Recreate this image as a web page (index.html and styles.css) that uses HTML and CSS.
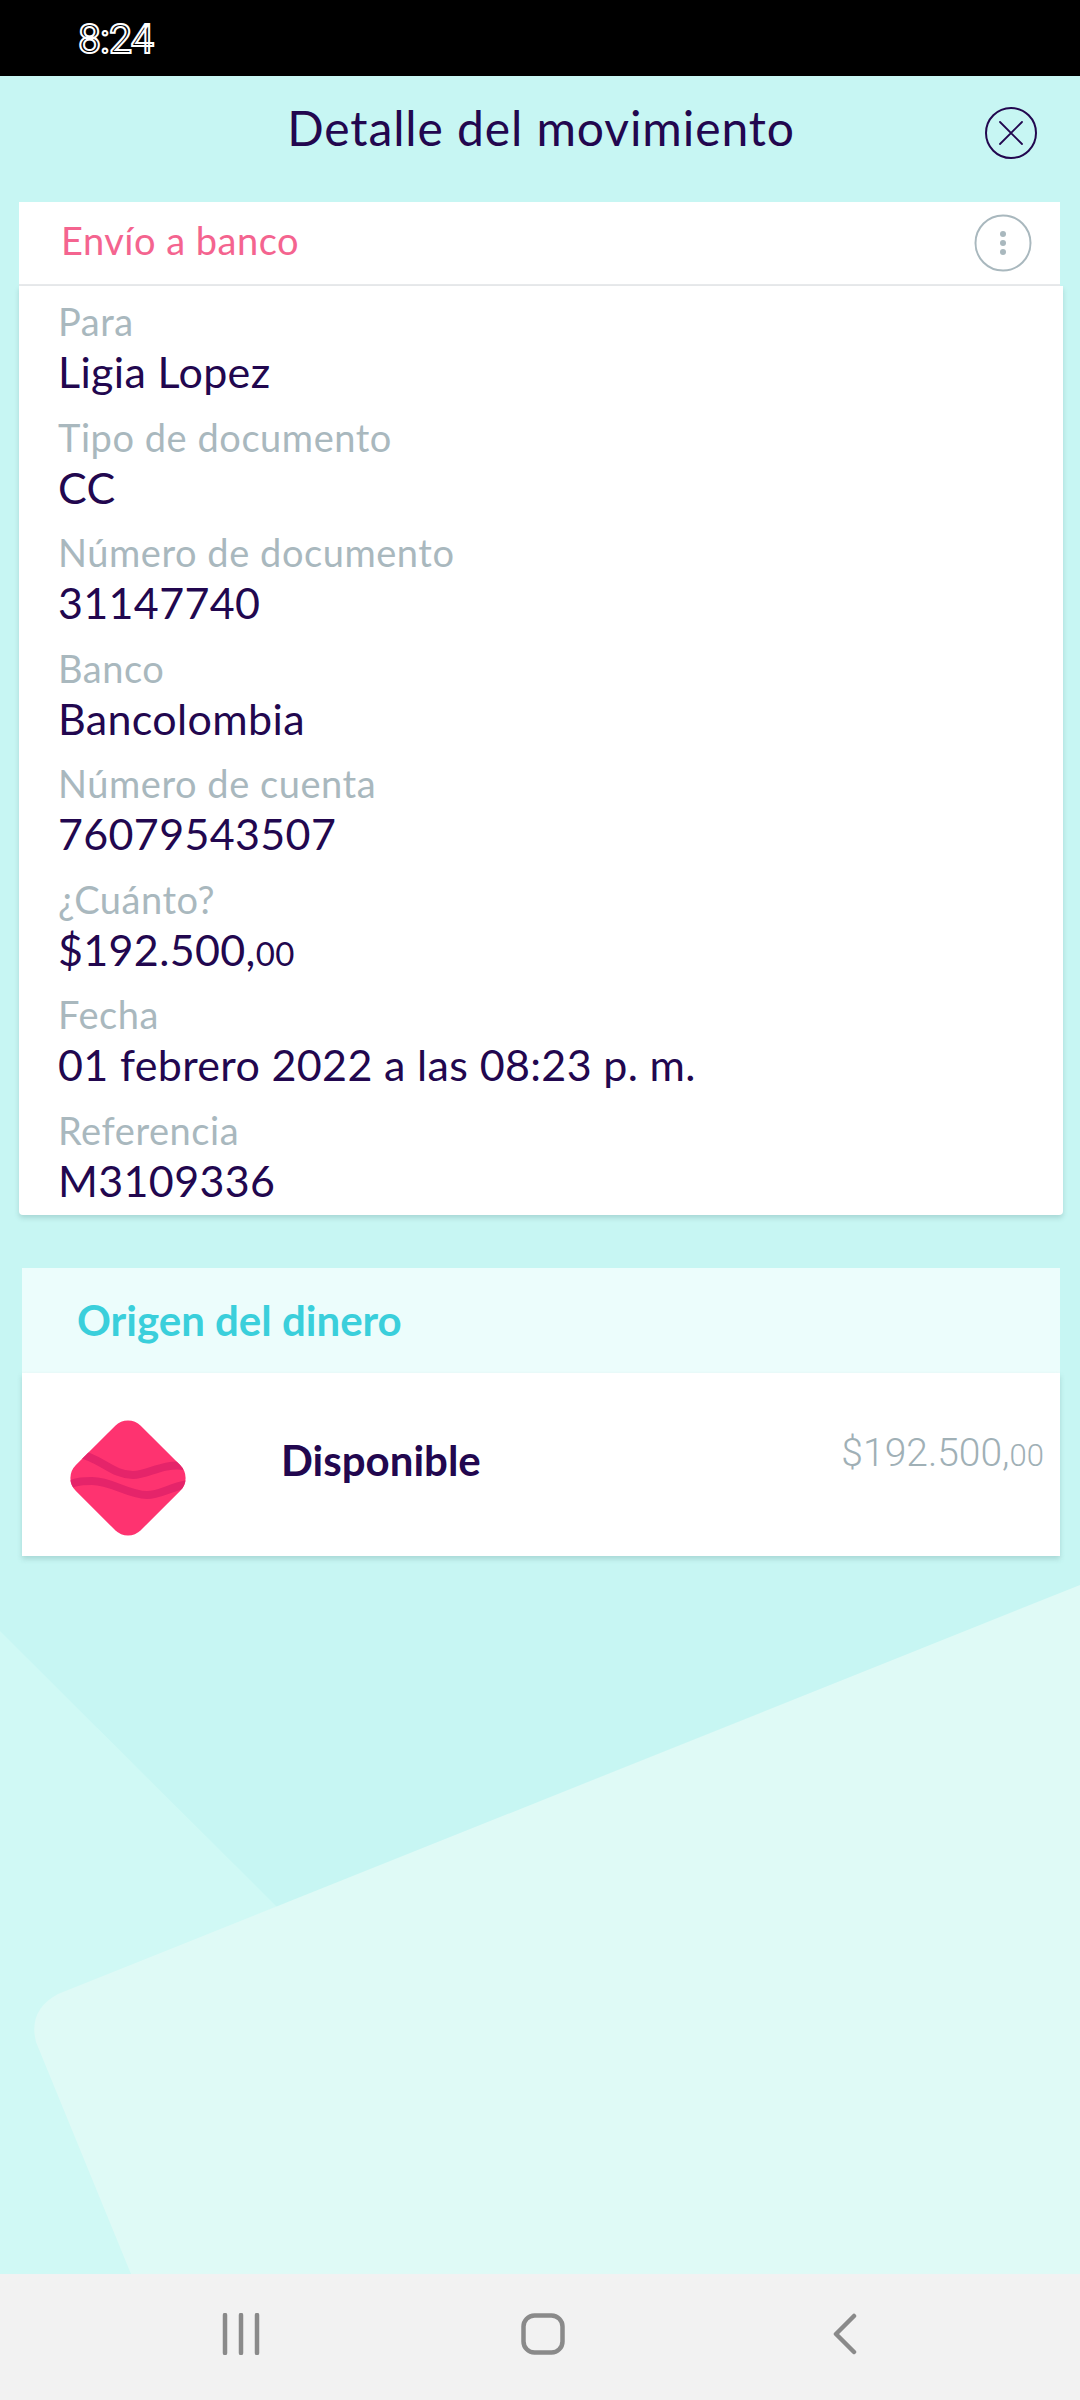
FILE: index.html
```html
<!DOCTYPE html>
<html lang="es">
<head>
<meta charset="utf-8">
<title>Detalle del movimiento</title>
<link rel="stylesheet" href="styles.css">
</head>
<body>
<div class="app">
  <div class="status"><span class="time">8:24</span></div>
  <main class="main">
    <svg class="bg" viewBox="0 0 1080 2198" preserveAspectRatio="none" aria-hidden="true">
      <polygon class="bg-tri" points="0,1555 278,1832 0,1990"/>
      <polygon class="bg-tri" points="0,1900 60,1900 131,2198 0,2198"/>
      <path class="bg-card" d="M1080,1509 L58,1918 Q28,1934 36,1966 L131,2198 L1080,2198 Z"/>
    </svg>
    <header class="top">
      <h1 class="title">Detalle del movimiento</h1>
      <button class="close" aria-label="Cerrar">
        <svg viewBox="0 0 52 52" width="52" height="52"><circle cx="26" cy="26" r="25" fill="none" stroke="#22074f" stroke-width="2"/><path d="M15 15 L37 37 M37 15 L15 37" stroke="#22074f" stroke-width="1.800" stroke-linecap="round" fill="none"/></svg>
      </button>
    </header>
    <section class="detail">
      <div class="detail-head">
        <span class="detail-name">Envío a banco</span>
        <svg class="more" viewBox="0 0 58 58" width="58" height="58"><circle cx="29" cy="29" r="27.500" fill="#fff" stroke="#a9b8be" stroke-width="2"/><circle cx="29" cy="20" r="3" fill="#a9b8be"/><circle cx="29" cy="29" r="3" fill="#a9b8be"/><circle cx="29" cy="38" r="3" fill="#a9b8be"/></svg>
      </div>
      <dl class="rows">
        <div class="row"><dt>Para</dt><dd>Ligia Lopez</dd></div>
        <div class="row"><dt>Tipo de documento</dt><dd>CC</dd></div>
        <div class="row"><dt>Número de documento</dt><dd>31147740</dd></div>
        <div class="row"><dt>Banco</dt><dd>Bancolombia</dd></div>
        <div class="row"><dt>Número de cuenta</dt><dd>76079543507</dd></div>
        <div class="row"><dt>¿Cuánto?</dt><dd>$192.500,<small class="cents">00</small></dd></div>
        <div class="row"><dt>Fecha</dt><dd>01 febrero 2022 a las 08:23 p. m.</dd></div>
        <div class="row"><dt>Referencia</dt><dd>M3109336</dd></div>
      </dl>
    </section>
    <section class="origin">
      <h2 class="origin-head">Origen del dinero</h2>
      <div class="origin-body">
        <svg class="gem" viewBox="0 0 116 118" width="116" height="118">
          <defs><clipPath id="gemclip"><rect x="12" y="13" width="92" height="92" rx="18" transform="rotate(45 58 59)"/></clipPath></defs>
          <rect x="12" y="13" width="92" height="92" rx="18" transform="rotate(45 58 59)" fill="#fe3370"/>
          <g clip-path="url(#gemclip)" fill="none" stroke="#e5246a" stroke-width="8">
            <path d="M6 34 C30 38 42 56 63 56 C78 56 92 44 114 47"/>
            <path d="M-2 66 C8 62 14 62 22 62 C42 62 58 76 77 76 C90 76 100 68 118 65"/>
          </g>
        </svg>
        <span class="origin-name">Disponible</span>
        <span class="origin-amount">$192.500,<small class="cents">00</small></span>
      </div>
    </section>
  </main>
  <nav class="nav">
    <svg viewBox="0 0 38 42" width="38" height="42"><path d="M3 2 V40 M19 2 V40 M35 2 V40" stroke="#8a8a8a" stroke-width="4.500" stroke-linecap="round" fill="none"/></svg>
    <svg class="nav-home" viewBox="0 0 44 42" width="44" height="42"><rect x="2.500" y="2.500" width="39" height="37" rx="11" fill="none" stroke="#8a8a8a" stroke-width="4.500"/></svg>
    <svg viewBox="0 0 24 42" width="24" height="42"><path d="M21 3 L3 21 L21 39" stroke="#8a8a8a" stroke-width="4.500" stroke-linecap="round" stroke-linejoin="round" fill="none"/></svg>
  </nav>
</div>
</body>
</html>
```
FILE: styles.css
```css
* { box-sizing: border-box; }
html, body { margin: 0; padding: 0; }
body { width: 1080px; height: 2400px; overflow: hidden; font-family: "Lato", "Noto Sans", sans-serif; color: #22074f; }
.app { display: flex; flex-direction: column; width: 1080px; height: 2400px; }
.status { height: 76px; background: #000; padding: 18px 0 0 78px; flex: none; }
.time { display: block; font: 400 41px/42px "Roboto", sans-serif; color: #000; -webkit-text-stroke: 2px #fff; letter-spacing: -1px; }
.main { position: relative; flex: 1; min-height: 0; background: #c7f6f3; overflow: hidden; }
.bg { position: absolute; inset: 0; width: 100%; height: 100%; }
.bg-tri { fill: #d0f9f5; }
.bg-card { fill: #dffaf6; }
.top { position: relative; height: 126px; display: flex; align-items: center; justify-content: center; }
.title { margin: 0 0 0 2px; padding-bottom: 22px; font-size: 48px; font-weight: 400; line-height: 56px; letter-spacing: 0.9px; }
.close { position: absolute; right: 43px; top: 31px; width: 52px; height: 52px; padding: 0; border: 0; background: none; }
.close svg { display: block; }
.detail { position: relative; margin: 0 17px 0 19px; }
.detail-head { width: 1041px; height: 84px; display: flex; align-items: center; justify-content: space-between; padding: 0 28px 0 42px; background: #fff; border-bottom: 2px solid #e8eaec; }
.detail-name { font-size: 38px; line-height: 44px; padding-bottom: 6px; color: #f4648f; letter-spacing: 0.5px; }
.more { display: block; }
.rows { margin: 0; padding: 11px 0 0 39px; height: 929px; background: #fff; border-radius: 0 0 4px 4px; box-shadow: 0 3px 5px rgba(60, 110, 110, .22); }
.row { height: 115.500px; }
.row dt { font-size: 38px; line-height: 48px; font-weight: 400; color: #a9b8be; letter-spacing: 0.55px; }
.row dd { margin: 0; font-size: 43px; line-height: 54px; color: #22074f; letter-spacing: 0.35px; }
.cents { font-size: 33px; }
.origin { position: relative; margin: 53px 20px 0 22px; }
.origin-head { margin: 0; height: 105px; padding-left: 55px; font-size: 42px; line-height: 105px; font-weight: 700; color: #3acfdb; background: #ecfdfc; }
.origin-body { position: relative; height: 183px; display: flex; align-items: center; padding: 0 16px 0 48px; background: #fff; box-shadow: 0 3px 5px rgba(60, 110, 110, .22); }
.gem { flex: none; margin-top: 26px; }
.origin-name { margin-left: 95px; font-size: 42px; font-weight: 700; color: #22074f; padding-bottom: 10px; }
.origin-amount { margin-left: auto; padding-bottom: 20px; font: 300 39px/44px "Roboto", sans-serif; color: #a0b0b6; }
.origin-amount .cents { font-size: 31px; }
.nav { height: 126px; flex: none; display: flex; align-items: center; gap: 261px; background: #f2f2f2; padding: 0 0 6px 222px; }
.nav-home { margin-right: 7px; }
```
